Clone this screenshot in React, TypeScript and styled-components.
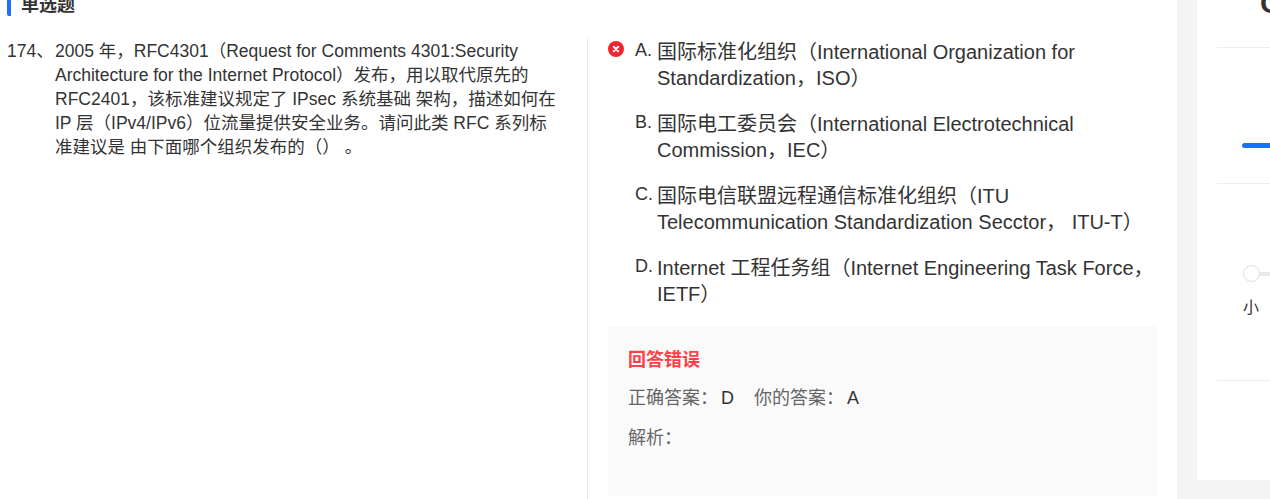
import styled, { createGlobalStyle } from 'styled-components';

const GlobalStyle = createGlobalStyle`
  html, body {
    margin: 0;
    padding: 0;
    background: #f4f4f4;
    overflow: hidden;
  }
`;

interface IOption {
  key: string;
  text: string;
  wrong?: boolean;
}

const options: IOption[] = [
  {
    key: 'A.',
    text: '国际标准化组织（International Organization for Standardization，ISO）',
    wrong: true,
  },
  {
    key: 'B.',
    text: '国际电工委员会（International Electrotechnical Commission，IEC）',
  },
  {
    key: 'C.',
    text: '国际电信联盟远程通信标准化组织（ITU Telecommunication Standardization Secctor， ITU-T）',
  },
  {
    key: 'D.',
    text: 'Internet 工程任务组（Internet Engineering Task Force，IETF）',
  },
];

const WrongIcon = () => (
  <svg width="17" height="16" viewBox="0 0 17 16">
    <circle cx="8" cy="8" r="8" fill="#f5222d" />
    <path d="M5.8 5.8l4.4 4.4M10.2 5.8l-4.4 4.4" stroke="#fff" strokeWidth="2" strokeLinecap="round" />
  </svg>
);

const App = () => {
  return (
    <Page>
      <GlobalStyle />
      <Main>
        <SectionTitle>单选题</SectionTitle>
        <QuestionRow>
          <Stem>
            <StemNumber>174、</StemNumber>
            <StemText>
              2005 年，RFC4301（Request for Comments 4301:Security Architecture for the Internet
              Protocol）发布，用以取代原先的 RFC2401，该标准建议规定了 IPsec 系统基础 架构，描述如何在
              IP 层（IPv4/IPv6）位流量提供安全业务。请问此类 RFC 系列标准建议是 由下面哪个组织发布的（）
              。
            </StemText>
          </Stem>
          <Answers>
            {options.map((option) => (
              <Option key={option.key}>
                <OptionMark>{option.wrong && <WrongIcon />}</OptionMark>
                <OptionKey>{option.key}</OptionKey>
                <OptionText>{option.text}</OptionText>
              </Option>
            ))}
            <Result>
              <ResultTitle>回答错误</ResultTitle>
              <ResultLine>
                <ResultLabel>正确答案：</ResultLabel>
                <ResultValue>D</ResultValue>
                <ResultLabel>你的答案：</ResultLabel>
                <ResultValue>A</ResultValue>
              </ResultLine>
              <ResultLine>
                <ResultLabel>解析：</ResultLabel>
              </ResultLine>
            </Result>
          </Answers>
        </QuestionRow>
      </Main>
      <Side>
        <SideHead>
          <SideGlyph>C</SideGlyph>
        </SideHead>
        <SideProgress>
          <ProgressBar />
        </SideProgress>
        <SideSize>
          <SliderRow>
            <SliderKnob />
            <SliderTrack />
          </SliderRow>
          <SizeLabel>小</SizeLabel>
        </SideSize>
      </Side>
    </Page>
  );
};

export default App;

const Page = styled.div`
  display: flex;
  align-items: flex-start;
  gap: 20px;
  width: 1270px;
  height: 499px;
  overflow: hidden;
  background: #f4f4f4;
  font-family: 'Liberation Sans', 'Noto Sans CJK SC', sans-serif;
`;

const Main = styled.div`
  width: 1177px;
  height: 499px;
  flex-shrink: 0;
  background: #fff;
  overflow: hidden;
`;

const SectionTitle = styled.div`
  height: 22px;
  margin: -6px 0 0 7px;
  padding-left: 10px;
  border-left: 4px solid #1e6fff;
  border-radius: 2px;
  font-size: 18px;
  line-height: 22px;
  font-weight: 700;
  color: #333;
`;

const QuestionRow = styled.div`
  display: flex;
  margin-top: 22px;
  height: 461px;
`;

const Stem = styled.div`
  display: flex;
  width: 588px;
  flex-shrink: 0;
  padding: 1px 28px 0 7px;
  box-sizing: border-box;
  border-right: 1px solid #ececec;
  font-size: 17.5px;
  line-height: 24px;
  color: #333;
`;

const StemNumber = styled.div`
  width: 48px;
  flex-shrink: 0;
`;

const StemText = styled.div`
  flex: 1;
`;

const Answers = styled.div`
  flex: 1;
  padding: 1px 20px 0 20px;
`;

const Option = styled.div`
  display: flex;
  margin-bottom: 20px;
  font-size: 20px;
  line-height: 26px;
  color: #333;
`;

const OptionMark = styled.div`
  display: flex;
  align-items: flex-start;
  width: 27px;
  height: 26px;
  flex-shrink: 0;
  padding-top: 2px;
  box-sizing: border-box;
`;

const OptionKey = styled.div`
  width: 22px;
  flex-shrink: 0;
  font-size: 18px;
  line-height: 23px;
`;

const OptionText = styled.div`
  flex: 1;
`;

const Result = styled.div`
  height: 170px;
  margin-top: -1px;
  padding: 22px 20px 0;
  box-sizing: border-box;
  background: #fafafa;
`;

const ResultTitle = styled.div`
  font-size: 18px;
  line-height: 24px;
  font-weight: 700;
  color: #ff4048;
`;

const ResultLine = styled.div`
  display: flex;
  align-items: center;
  margin-top: 14px;
  font-size: 18px;
  line-height: 24px;

  & + & {
    margin-top: 16px;
  }
`;

const ResultLabel = styled.span`
  color: #666;
`;

const ResultValue = styled.span`
  margin: 0 20px 0 3px;
  color: #333;
`;

const Side = styled.div`
  flex: 1;
  height: 480px;
  padding-left: 20px;
  background: #fff;
  overflow: hidden;
`;

const SideHead = styled.div`
  height: 47px;
  border-bottom: 1px solid #eee;
  overflow: hidden;
`;

const SideGlyph = styled.div`
  margin: -13px 0 0 43px;
  font-size: 30px;
  line-height: 32px;
  font-weight: 700;
  color: #333;
`;

const SideProgress = styled.div`
  height: 136px;
  padding: 95px 0 0 25px;
  box-sizing: border-box;
  border-bottom: 1px solid #eee;
`;

const ProgressBar = styled.div`
  height: 5px;
  border-radius: 3px 0 0 3px;
  background: #1e6fff;
`;

const SideSize = styled.div`
  height: 197px;
  padding: 81px 0 0 26px;
  box-sizing: border-box;
  border-bottom: 1px solid #eee;
`;

const SliderRow = styled.div`
  display: flex;
  align-items: center;
`;

const SliderKnob = styled.div`
  width: 17px;
  height: 17px;
  flex-shrink: 0;
  box-sizing: border-box;
  border: 1px solid #ddd;
  border-radius: 50%;
  background: #fff;
`;

const SliderTrack = styled.div`
  flex: 1;
  height: 4px;
  background: #e8e8e8;
`;

const SizeLabel = styled.div`
  margin-top: 15px;
  font-size: 16px;
  line-height: 22px;
  color: #333;
`;
